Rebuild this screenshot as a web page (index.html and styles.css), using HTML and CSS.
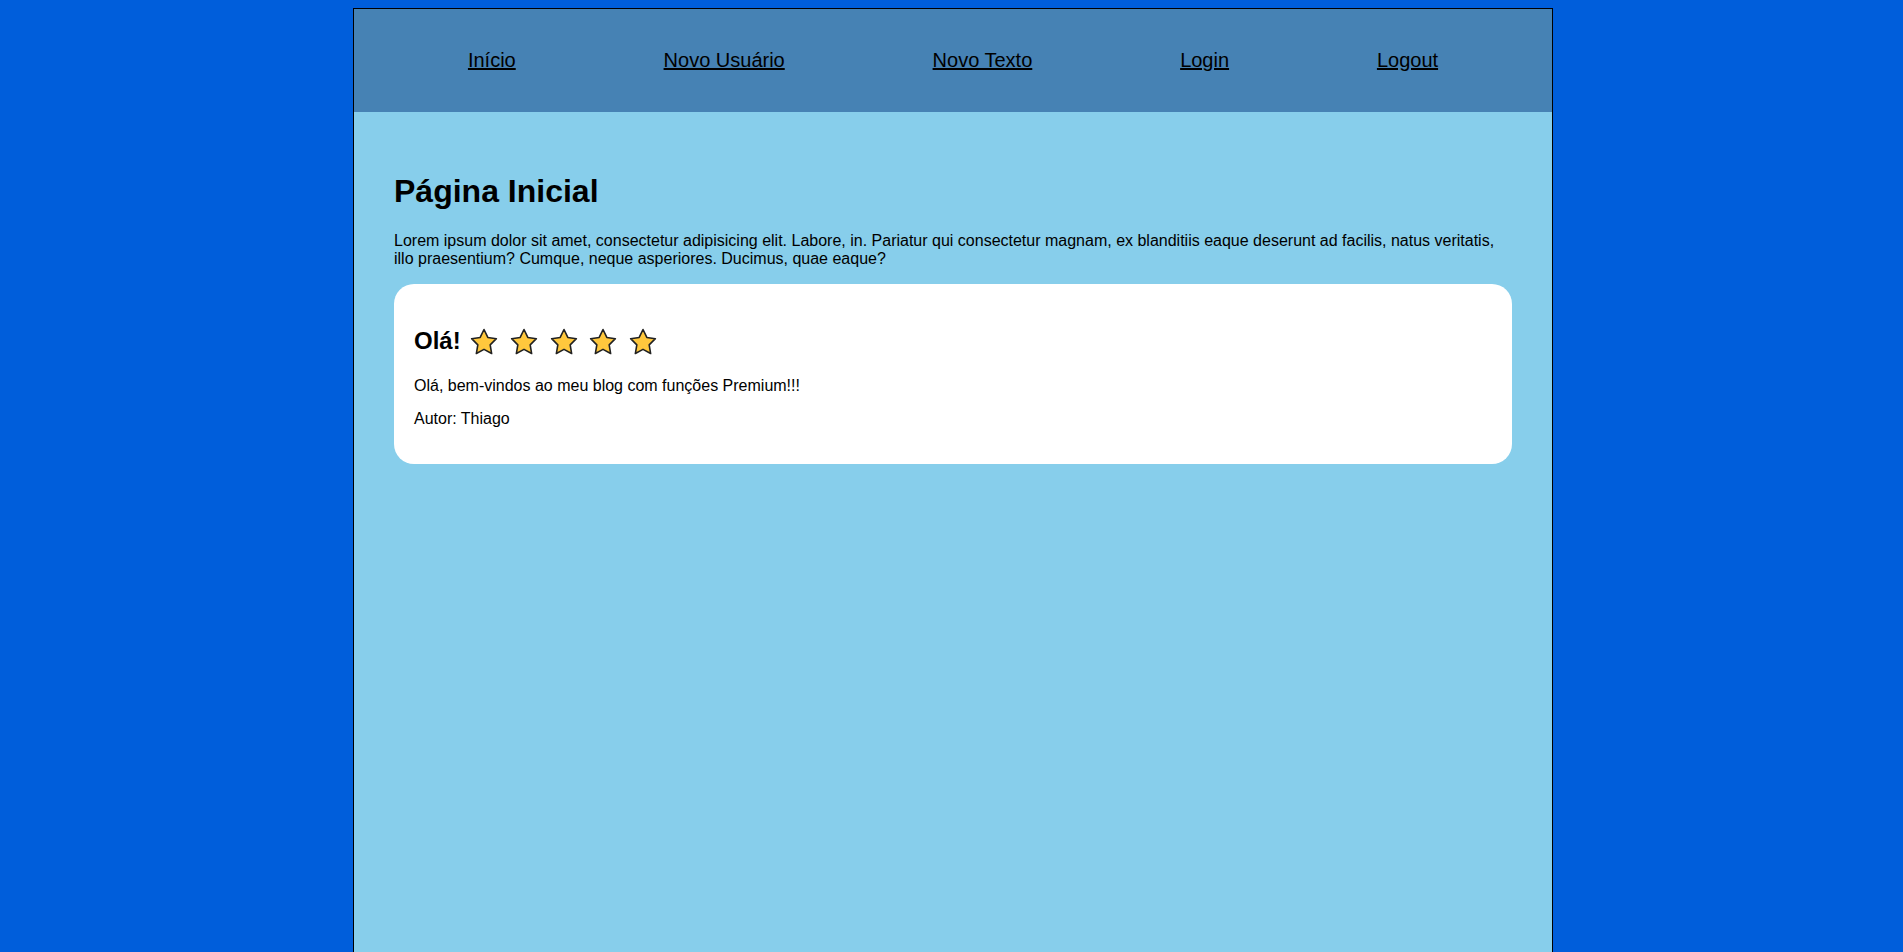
FILE: index.html
```html
<!DOCTYPE html>
<html lang="pt-BR">
<head>
<meta charset="utf-8">
<title>Página Inicial</title>
<link rel="stylesheet" href="styles.css">
</head>
<body>
<div class="container">
  <header class="header">
    <nav>
      <ul class="menu">
        <li><a href="#">Início</a></li>
        <li><a href="#">Novo Usuário</a></li>
        <li><a href="#">Novo Texto</a></li>
        <li><a href="#">Login</a></li>
        <li><a href="#">Logout</a></li>
      </ul>
    </nav>
  </header>
  <main class="main">
    <h1>Página Inicial</h1>
    <p>Lorem ipsum dolor sit amet, consectetur adipisicing elit. Labore, in. Pariatur qui consectetur magnam, ex blanditiis eaque deserunt ad facilis, natus veritatis, illo praesentium? Cumque, neque asperiores. Ducimus, quae eaque?</p>
    <article class="card">
      <h2 class="card-title">Olá!
        <svg class="star" viewBox="0 0 32 32"><polygon points="16,4.5 19.82,12.44 28.36,13.68 22.18,19.81 23.64,28.52 16,24.4 8.36,28.52 9.82,19.81 3.64,13.68 12.18,12.44"/></svg>
        <svg class="star" viewBox="0 0 32 32"><polygon points="16,4.5 19.82,12.44 28.36,13.68 22.18,19.81 23.64,28.52 16,24.4 8.36,28.52 9.82,19.81 3.64,13.68 12.18,12.44"/></svg>
        <svg class="star" viewBox="0 0 32 32"><polygon points="16,4.5 19.82,12.44 28.36,13.68 22.18,19.81 23.64,28.52 16,24.4 8.36,28.52 9.82,19.81 3.64,13.68 12.18,12.44"/></svg>
        <svg class="star" viewBox="0 0 32 32"><polygon points="16,4.5 19.82,12.44 28.36,13.68 22.18,19.81 23.64,28.52 16,24.4 8.36,28.52 9.82,19.81 3.64,13.68 12.18,12.44"/></svg>
        <svg class="star" viewBox="0 0 32 32"><polygon points="16,4.5 19.82,12.44 28.36,13.68 22.18,19.81 23.64,28.52 16,24.4 8.36,28.52 9.82,19.81 3.64,13.68 12.18,12.44"/></svg>
      </h2>
      <p>Olá, bem-vindos ao meu blog com funções Premium!!!</p>
      <p>Autor: Thiago</p>
    </article>
  </main>
</div>
</body>
</html>
```
FILE: styles.css
```css
html, body {
  background: #005edb;
}
body {
  margin: 8px 8px 0 11px;
  font-family: "Liberation Sans", Arial, sans-serif;
  color: #000;
}
.container {
  width: 1198px;
  margin: 0 auto;
  border: 1px solid #000;
  background: #87ceeb;
  min-height: calc(100vh - 8px);
}
.header {
  background: #4682b4;
  padding: 40px 40px 40px;
}
.menu {
  list-style: none;
  margin: 0;
  padding: 0;
  display: flex;
  justify-content: space-around;
  font-size: 20px;
}
.menu a {
  color: #000;
  text-decoration: underline;
}
.main {
  padding: 40px;
}
.main h1 {
  font-size: 32px;
  margin: 21.44px 0;
}
.main p {
  font-size: 16px;
  margin: 16px 0;
}
.card {
  background: #fff;
  border-radius: 20px;
  padding: 20px 20px 21px;
}
.card-title {
  font-size: 24px;
  margin: 21px 0 19.92px;
  display: flex;
  align-items: center;
  height: 32px;
}
.star {
  width: 32px;
  height: 32px;
  margin-left: 7.7px;
}
.star polygon {
  fill: #ffc83d;
  stroke: #222;
  stroke-width: 1.6;
  stroke-linejoin: round;
}
.card p {
  margin: 15px 0;
}
```
